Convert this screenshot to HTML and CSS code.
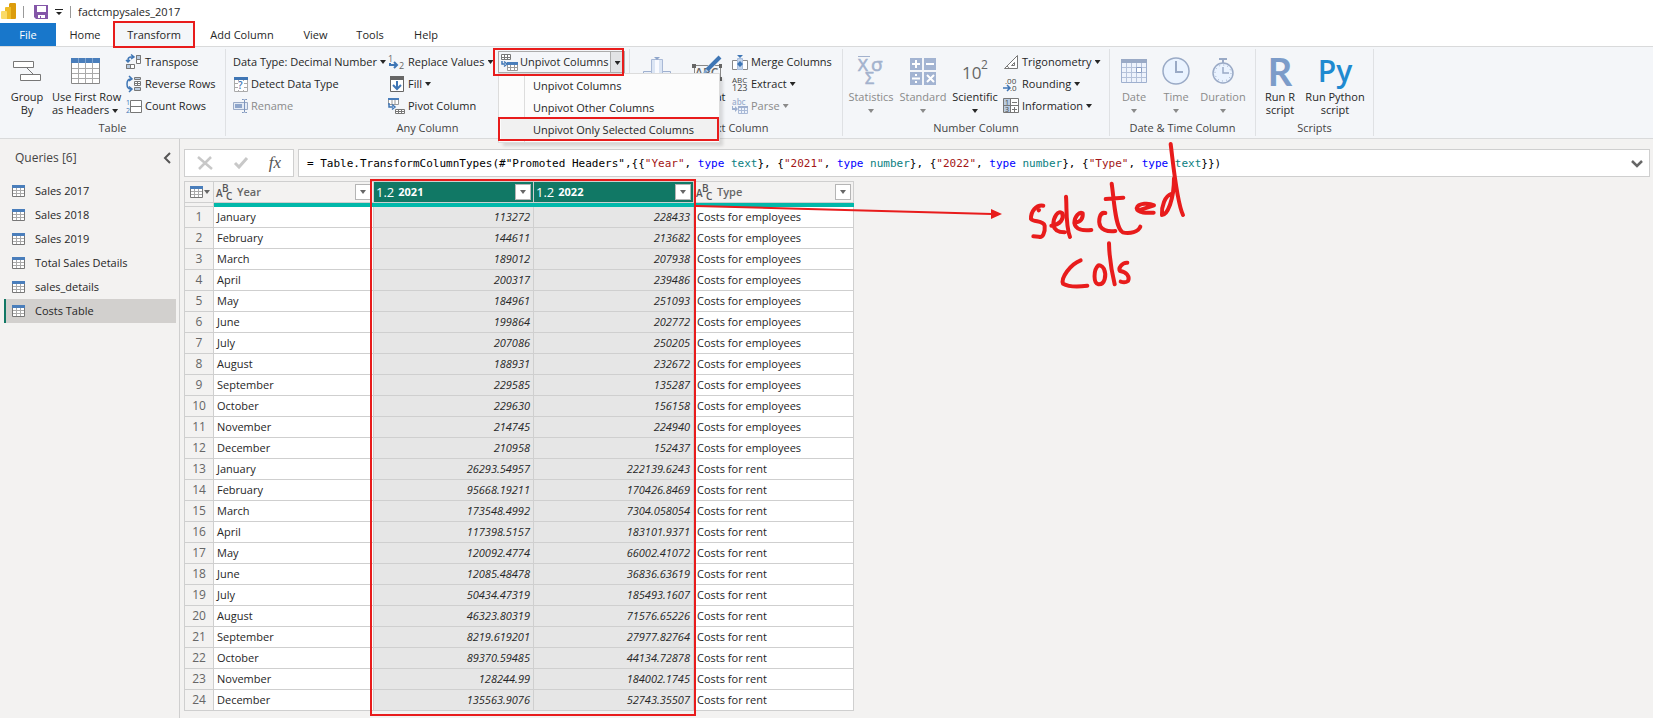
FILE: index.html
```html
<!DOCTYPE html>
<html lang="en">
<head>
<meta charset="utf-8">
<title>factcmpysales_2017</title>
<link rel="stylesheet" href="styles.css">
</head>
<body>
<svg class="defs" aria-hidden="true">
  <symbol id="table" viewBox="0 0 13 12"><path fill="#fff" stroke="#777" d="M.5.5h12v11H.5z"/><path stroke="#aaa" d="M1 5.500h11M1 8.500h11M4.500 3v8M8.500 3v8"/><path fill="#4a7ebb" d="M0 0h13v3H0z"/></symbol>
</svg>

<header class="titlebar">
  <svg width="15" height="17" viewBox="0 0 15 17"><path fill="#dc9c0c" d="M9 0h5q1 0 1 1v14q0 1-1 1H8V1z"/><path fill="#eebc28" d="M4 5q0-1 1-1h5v12H4z"/><path fill="#fadb68" d="M0 9q0-1 1-1h4q1 0 1 1v7H1q-1 0-1-1z"/></svg>
  <i class="rule"></i>
  <svg class="save" width="14" height="14" viewBox="0 0 14 14"><path fill="#8456a8" d="M0 0h14v14H2l-2-2z"/><path fill="#fff" d="M3 1h9v6H3zM4 10h7v3H7v-2H6v2H4z"/></svg>
  <svg width="8" height="8" viewBox="0 0 8 8"><path fill="#222" d="M0 1h8v1H0zM1 4h6L4 7z"/></svg>
  <i class="rule"></i>
  <span>factcmpysales_2017</span>
</header>

<nav class="tabs">
  <button class="file">File</button><button class="t-home">Home</button><button class="t-trans">Transform</button><button class="t-add">Add Column</button><button class="t-view">View</button><button class="t-tools">Tools</button><button class="t-help">Help</button>
</nav>

<section class="ribbon">
  <div class="group g-table">
    <div class="tools">
      <button class="big w50"><span class="ico"><svg width="30" height="22" viewBox="0 0 30 22"><path stroke="#777" d="M14 7l7 7"/><path fill="#fff" stroke="#777" d="M1.500 1.500h20v6h-20zM8.500 14.500h20v6h-20z"/></svg></span>Group<br>By</button>
      <button class="big w66"><span class="ico"><svg width="29" height="26" viewBox="0 0 29 26"><path fill="#fff" stroke="#888" d="M.5.5h28v25H.5z"/><path stroke="#aaa" d="M1 10.500h27M1 15.500h27M1 20.500h27M7.500 5v20M14.500 5v20M21.500 5v20"/><path fill="#4a7ebb" d="M0 0h29v5H0z"/><path stroke="#7fa5d2" d="M7.500 0v5M14.500 0v5M21.500 0v5"/></svg></span>Use First Row<br>as Headers <i class="dd"></i></button>
      <div class="stack">
        <button><svg width="16" height="16" viewBox="0 0 16 16"><path fill="#fff" stroke="#777" d="M10.500 1.500h4v8h-4zM.5 10.500h8v4h-8z"/><path fill="#b9cbe0" stroke="#777" d="M10.500 1.500h4v4h-4zM.5 10.500h4v4h-4z"/><path fill="none" stroke="#3f76b5" stroke-width="1.500" d="M2 8V6q0-3 3-3h2M0 6l2 2 2-2M5 .5L8 3 5 5"/></svg>Transpose</button>
        <button><svg width="16" height="16" viewBox="0 0 16 16"><path fill="#b9cbe0" stroke="#777" d="M8.500 1.500h6v2h-6zM8.500 11.500h6v3h-6z"/><path fill="#fff" stroke="#777" d="M8.500 5.500h6v4h-6zM8 7.500h7M11.500 5v5"/><path fill="none" stroke="#3f76b5" stroke-width="1.500" d="M5 3Q1 3 1 8t4 5M3 0l3 3-3 2M3 10.500L6 13l-3 3"/></svg>Reverse Rows</button>
        <button><svg width="16" height="16" viewBox="0 0 16 16"><path fill="#fff" stroke="#777" d="M4.500 2.500h11v12h-11zM4 8.500h12"/><g fill="#3f76b5" font-size="7"><text x="0" y="7">1</text><text x="0" y="15">2</text></g></svg>Count Rows</button>
      </div>
    </div>
    <div class="label">Table</div>
  </div>

  <div class="group g-any">
    <div class="tools">
      <div class="stack types">
        <button>Data Type: Decimal Number <i class="dd"></i></button>
        <button><svg width="15" height="15" viewBox="0 0 15 15"><path fill="#fff" stroke="#aaa" d="M1.500.500h13v14h-13zM2 6.500h12M2 10.500h12M5.500 3v11M10.500 3v11"/><path fill="#3f76b5" d="M1 0h14v3H1z"/><path fill="#fff" d="M5 4h6v9H5z"/><text x="5" y="12" fill="#3f76b5" font-size="10" font-weight="600">?</text></svg>Detect Data Type</button>
        <button class="off"><svg width="15" height="14" viewBox="0 0 15 14"><path fill="#e4ebf5" stroke="#9aaac6" d="M.5 3.500h14v7H.5z"/><path fill="#8fa6cb" d="M2 5h7v4H2z"/><path fill="none" stroke="#7d95bd" d="M9 .5h1.500q1 0 1 1v11q0 1-1 1H9M14 .5h-1.500q-1 0-1 1v11q0 1 1 1H14"/></svg>Rename</button>
      </div>
      <div class="stack values">
        <button><svg width="17" height="16" viewBox="0 0 17 16"><g fill="#666" font-size="9"><text x="0" y="8">1</text><text x="11" y="15">2</text></g><path fill="none" stroke="#3f76b5" stroke-width="2" d="M2 9v2h6M6 8l3 3-3 3"/></svg>Replace Values <i class="dd"></i></button>
        <button><svg width="17" height="16" viewBox="0 0 17 16"><path fill="#fff" stroke="#666" d="M2.500.5h13v15h-13z"/><path fill="#666" d="M2 0h14v4H2z"/><path fill="none" stroke="#3f76b5" stroke-width="2" d="M9 5v8M5 9l4 4 4-4"/></svg>Fill <i class="dd"></i></button>
        <button><svg width="17" height="16" viewBox="0 0 17 16"><path fill="#fff" stroke="#999" d="M.5 1.500h10v5H.5zM4 2v5M7 2v5"/><path fill="#4a7ebb" d="M0 0h11v2H0z"/><path fill="#fff" stroke="#777" d="M7.500 11.500h9v4h-9zM7 13.500h10M10.500 11v5M13.500 11v5"/><path fill="none" stroke="#3f76b5" stroke-width="1.500" d="M1 5v4h4M4 6.500L7 9l-3 2.500"/></svg>Pivot Column</button>
      </div>
      <div class="unpivot">
        <button class="split"><svg width="17" height="17" viewBox="0 0 17 17"><path fill="#fff" stroke="#777" d="M.5.5h9v5h-9zM0 3.500h10M3.500 0v6M6.500 0v6"/><path fill="#fff" stroke="#999" d="M6.500 10.500h10v6h-10zM7 13.500h9M9.500 11v5M13.500 11v5"/><path fill="#4a7ebb" d="M6 8h11v3H6z"/><path fill="none" stroke="#3f76b5" stroke-width="1.500" d="M1 7v3h3M3 7.500L6 10l-3 2.500"/></svg>Unpivot Columns</button><button class="more" aria-label="More"><i class="dd"></i></button>
        <div class="menu">
          <button>Unpivot Columns</button>
          <button>Unpivot Other Columns</button>
          <button class="hot">Unpivot Only Selected Columns</button>
        </div>
      </div>
    </div>
    <div class="label">Any Column</div>
  </div>

  <div class="group g-text">
    <div class="tools">
      <button class="big w50 off"><span class="ico"><svg width="28" height="28" viewBox="0 0 28 28"><path fill="#eaf0fa" stroke="#9fb0cf" d="M.5 26V14.500h9V26M18.500 26V14.500h9V26"/><path fill="#dbe5f4" stroke="#a9b9d6" d="M8.500 2.500h11V26h-11z"/><path fill="#f8faff" d="M12 3h4v23h-4z"/><path fill="#8fa6cb" d="M11 0h6l-3 3z"/></svg></span>Split<br>Column</button>
      <button class="big w50"><span class="ico"><svg width="30" height="32" viewBox="0 0 30 32"><path fill="none" stroke="#888" d="M2.500 10.500h26v14h-26z"/><path fill="#666" d="M0 9h4v4H0zM27 9h3v4h-3zM27 22h3v4h-3z"/><text x="3" y="22" font-size="12" font-weight="600" fill="#666">ABC</text><path stroke="#f4f6f9" stroke-width="5" d="M16 14L28 2"/><path stroke="#3f76b5" stroke-width="4" d="M15 15L28 2"/><path fill="#7fa5d2" d="M11 19l2-5 3 3z"/></svg></span>Format<br><i class="dd"></i></button>
      <div class="stack">
        <button><svg width="16" height="15" viewBox="0 0 16 15"><path fill="#fff" stroke="#888" d="M5 5.500H.5v9H5M11 5.500h4.500v9H11"/><path fill="#c3d4ea" stroke="#a8bddc" d="M5.500 3.500h5v11h-5z"/><path fill="#3f76b5" d="M5 0h6L8 3zM5 9l3-3 3 3-3 3z"/></svg>Merge Columns</button>
        <button><svg width="16" height="18" viewBox="0 0 16 18"><g fill="#444" font-size="8"><text x="0" y="8">ABC</text><text x="0" y="16" font-size="9">123</text></g></svg>Extract <i class="dd"></i></button>
        <button class="off"><svg width="16" height="16" viewBox="0 0 16 16"><text x="0" y="7" font-size="8" font-weight="600" fill="#9fb0cf">abc</text><path fill="#eef3fb" stroke="#a9b9d6" d="M6.500 9.500h9v6h-9zM6 12.500h10M9.500 9v7M12.500 9v7"/><path fill="#9fb0cf" d="M6 8h10v2H6zM0 8h1v2h2V8l3 3-3 3v-2H0z"/></svg>Parse <i class="dd"></i></button>
      </div>
    </div>
    <div class="label">Text Column</div>
  </div>

  <div class="group g-num">
    <div class="tools">
      <button class="big w50 off"><span class="ico"><svg width="28" height="30" viewBox="0 0 28 30"><g fill="#a3b2cd" stroke="#a3b2cd" stroke-width=".6"><text x="1" y="15" font-size="17">X</text><text x="14" y="15" font-size="19">σ</text><text x="8" y="28" font-size="16">Σ</text></g><path stroke="#a3b2cd" d="M1 .500h12"/></svg></span>Statistics<br><i class="dd"></i></button>
      <button class="big w54 off"><span class="ico"><svg width="26" height="27" viewBox="0 0 26 27"><path fill="#a3b4d2" d="M0 0h12v12H0zM14 0h12v12H14zM0 14h12v13H0zM14 14h12v13H14z"/><path stroke="#fff" stroke-width="2" d="M2 6h8M6 2v8M16 6h8M2 20.500h8M17 17l7 7M24 17l-7 7"/><path fill="#fff" d="M5 16h2v2H5zM5 23h2v2H5z"/></svg></span>Standard<br><i class="dd"></i></button>
      <button class="big w50"><span class="ico"><svg width="26" height="28" viewBox="0 0 26 28"><g fill="#666"><text x="0" y="22" font-size="17">10</text><text x="19" y="12" font-size="12">2</text></g></svg></span>Scientific<br><i class="dd"></i></button>
      <div class="stack trig">
        <button><svg width="16" height="16" viewBox="0 0 16 16"><path fill="#fff" stroke="#777" d="M1.500 14.500h13V1.500zM8.500 11.500h3v-3zM4 12q2 1 2 3"/></svg>Trigonometry <i class="dd"></i></button>
        <button><svg width="16" height="16" viewBox="0 0 16 16"><g fill="#444" font-size="8"><text x="2" y="8">.00</text><text x="7" y="15">.0</text></g><path fill="none" stroke="#3f76b5" stroke-width="1.500" d="M0 12h6M4 9l3 3-3 3"/></svg>Rounding <i class="dd"></i></button>
        <button><svg width="16" height="16" viewBox="0 0 16 16"><path fill="#fff" stroke="#777" d="M.5.5h15v14H.5z"/><path fill="#b9cbe0" d="M1 1h6v13H1z"/><path stroke="#777" d="M7.500 1v13M1 7.500h14M9 4.500h5M9 11.500h5M11.500 9v5"/><g fill="#444" font-size="7"><text x="2" y="7">1</text><text x="2" y="14">3</text></g></svg>Information <i class="dd"></i></button>
      </div>
    </div>
    <div class="label">Number Column</div>
  </div>

  <div class="group g-date">
    <div class="tools">
      <button class="big w44 off"><span class="ico"><svg width="26" height="24" viewBox="0 0 26 24"><path fill="#eef3fc" stroke="#9fb0cf" d="M.5.5h25v23H.5z"/><path fill="#9aaac6" d="M0 0h26v4H0z"/><path stroke="#b5c2da" d="M1 8.500h24M1 13.500h24M1 18.500h24M5.500 4v19M10.500 4v19M15.500 4v19M20.500 4v19"/><path fill="#fff" stroke="#8b9fc4" d="M15.500 8.500h5v5h-5z"/></svg></span>Date<br><i class="dd"></i></button>
      <button class="big w40 off"><span class="ico"><svg width="28" height="28" viewBox="0 0 28 28"><circle cx="14" cy="14" r="13" fill="#eaf3ff" stroke="#9aaac6" stroke-width="1.500"/><path fill="none" stroke="#9aaac6" stroke-width="2" d="M14 4v11h7"/></svg></span>Time<br><i class="dd"></i></button>
      <button class="big w54 off"><span class="ico"><svg width="22" height="26" viewBox="0 0 22 26"><path fill="#9aaac6" d="M7 0h8v2h-3v3h-2V2H7z"/><circle cx="11" cy="15" r="10" fill="#eaf3ff" stroke="#9aaac6" stroke-width="1.500"/><path fill="none" stroke="#9aaac6" stroke-width="1.500" d="M11 9v6h6"/><circle cx="11" cy="15" r="8" fill="none" stroke="#9aaac6" stroke-dasharray="1 3.190"/></svg></span>Duration<br><i class="dd"></i></button>
    </div>
    <div class="label">Date &amp; Time Column</div>
  </div>

  <div class="group g-script">
    <div class="tools">
      <button class="big w44"><span class="ico letter r">R</span>Run R<br>script</button>
      <button class="big w66"><span class="ico letter py">Py</span>Run Python<br>script</button>
    </div>
    <div class="label">Scripts</div>
  </div>
</section>

<main>
  <aside>
    <div class="head"><h2>Queries [6]</h2><button aria-label="Collapse"><svg width="8" height="12" viewBox="0 0 8 12"><path fill="none" stroke="#555" stroke-width="2" d="M7 1L2 6l5 5"/></svg></button></div>
    <ul>
      <li><button><svg><use href="#table"/></svg>Sales 2017</button></li>
      <li><button><svg><use href="#table"/></svg>Sales 2018</button></li>
      <li><button><svg><use href="#table"/></svg>Sales 2019</button></li>
      <li><button><svg><use href="#table"/></svg>Total Sales Details</button></li>
      <li><button><svg><use href="#table"/></svg>sales_details</button></li>
      <li><button class="sel"><svg><use href="#table"/></svg>Costs Table</button></li>
    </ul>
  </aside>
  <section class="work">
    <div class="formula">
      <div class="acts">
        <button aria-label="Cancel"><svg width="16" height="14" viewBox="0 0 16 14"><path fill="none" stroke="#c8c8c8" stroke-width="2.500" d="M1 1l14 12M14 1L2 13"/></svg></button>
        <button aria-label="Apply"><svg width="14" height="12" viewBox="0 0 14 12"><path fill="none" stroke="#c8c8c8" stroke-width="3" d="M1 6l4 4 8-9"/></svg></button>
        <button class="fx">fx</button>
      </div>
      <div class="code"><code>= Table.TransformColumnTypes(#"Promoted Headers",{{<s>"Year"</s>, <b>type</b> <u>text</u>}, {<s>"2021"</s>, <b>type</b> <u>number</u>}, {<s>"2022"</s>, <b>type</b> <u>number</u>}, {<s>"Type"</s>, <b>type</b> <u>text</u>}})</code><button aria-label="Expand"><svg width="12" height="8" viewBox="0 0 12 8"><path fill="none" stroke="#666" stroke-width="2.500" d="M1 1l5 5 5-5"/></svg></button></div>
    </div>
    <table>
      <colgroup><col class="c-num"><col class="c-data"><col class="c-data"><col class="c-data"><col class="c-data"></colgroup>
      <thead>
        <tr>
          <th><div class="hd corner"><svg width="13" height="12"><use href="#table"/></svg><i class="dd"></i></div></th>
          <th><div class="hd"><svg class="abc" width="17" height="18" viewBox="0 0 17 18"><text x="0" y="14">A</text><text x="6" y="9">B</text><text x="10" y="17">C</text></svg><span class="name">Year</span><button aria-label="Filter Year"><i class="dd"></i></button></div></th>
          <th class="on"><div class="hd"><em>1.2</em><span class="name">2021</span><button aria-label="Filter 2021"><i class="dd"></i></button></div></th>
          <th class="on"><div class="hd"><em>1.2</em><span class="name">2022</span><button aria-label="Filter 2022"><i class="dd"></i></button></div></th>
          <th><div class="hd"><svg class="abc" width="17" height="18" viewBox="0 0 17 18"><text x="0" y="14">A</text><text x="6" y="9">B</text><text x="10" y="17">C</text></svg><span class="name">Type</span><button aria-label="Filter Type"><i class="dd"></i></button></div></th>
        </tr>
        <tr class="bar"><td></td><td></td><td></td><td></td><td></td></tr>
      </thead>
      <tbody>
        <tr><th>1</th><td>January</td><td>113272</td><td>228433</td><td>Costs for employees</td></tr>
        <tr><th>2</th><td>February</td><td>144611</td><td>213682</td><td>Costs for employees</td></tr>
        <tr><th>3</th><td>March</td><td>189012</td><td>207938</td><td>Costs for employees</td></tr>
        <tr><th>4</th><td>April</td><td>200317</td><td>239486</td><td>Costs for employees</td></tr>
        <tr><th>5</th><td>May</td><td>184961</td><td>251093</td><td>Costs for employees</td></tr>
        <tr><th>6</th><td>June</td><td>199864</td><td>202772</td><td>Costs for employees</td></tr>
        <tr><th>7</th><td>July</td><td>207086</td><td>250205</td><td>Costs for employees</td></tr>
        <tr><th>8</th><td>August</td><td>188931</td><td>232672</td><td>Costs for employees</td></tr>
        <tr><th>9</th><td>September</td><td>229585</td><td>135287</td><td>Costs for employees</td></tr>
        <tr><th>10</th><td>October</td><td>229630</td><td>156158</td><td>Costs for employees</td></tr>
        <tr><th>11</th><td>November</td><td>214745</td><td>224940</td><td>Costs for employees</td></tr>
        <tr><th>12</th><td>December</td><td>210958</td><td>152437</td><td>Costs for employees</td></tr>
        <tr><th>13</th><td>January</td><td>26293.54957</td><td>222139.6243</td><td>Costs for rent</td></tr>
        <tr><th>14</th><td>February</td><td>95668.19211</td><td>170426.8469</td><td>Costs for rent</td></tr>
        <tr><th>15</th><td>March</td><td>173548.4992</td><td>7304.058054</td><td>Costs for rent</td></tr>
        <tr><th>16</th><td>April</td><td>117398.5157</td><td>183101.9371</td><td>Costs for rent</td></tr>
        <tr><th>17</th><td>May</td><td>120092.4774</td><td>66002.41072</td><td>Costs for rent</td></tr>
        <tr><th>18</th><td>June</td><td>12085.48478</td><td>36836.63619</td><td>Costs for rent</td></tr>
        <tr><th>19</th><td>July</td><td>50434.47319</td><td>185493.1607</td><td>Costs for rent</td></tr>
        <tr><th>20</th><td>August</td><td>46323.80319</td><td>71576.65226</td><td>Costs for rent</td></tr>
        <tr><th>21</th><td>September</td><td>8219.619201</td><td>27977.82764</td><td>Costs for rent</td></tr>
        <tr><th>22</th><td>October</td><td>89370.59485</td><td>44134.72878</td><td>Costs for rent</td></tr>
        <tr><th>23</th><td>November</td><td>128244.99</td><td>184002.1745</td><td>Costs for rent</td></tr>
        <tr><th>24</th><td>December</td><td>135563.9076</td><td>52743.35507</td><td>Costs for rent</td></tr>
      </tbody>
    </table>
  </section>
</main>

<svg class="ink" width="1240" height="718" viewBox="0 0 1240 718" role="img" aria-label="selected cols">
  <g fill="none" stroke="#e81c1c" stroke-width="2">
    <path d="M114 22h80v25h-80zM494 49h129v26H494zM499 118h219v22H499zM371 180h324v535H371z"/>
    <path d="M696 206l296 8"/>
  </g>
  <path fill="#e81c1c" d="M991 209l11 5-11 5z"/>
  <svg x="990" y="135" width="240" height="160" viewBox="0 0 720 480">
    <g fill="none" stroke="#e81c1c" stroke-width="12" stroke-linecap="round" stroke-linejoin="round">
      <path d="M146 226l1-1M160 212C138 208 122 230 123 252C132 262 160 256 164 272C166 292 158 310 146 305L130 304"/>
      <path d="M184 272C212 268 222 252 217 235C205 224 190 245 190 270C193 288 208 292 224 292M228 185C231 220 226 270 240 306"/>
      <path d="M254 262C272 262 280 250 278 235C268 230 254 242 253 264C256 284 280 288 304 285"/>
      <path d="M346 234C328 230 324 258 331 274C340 288 358 290 376 288"/>
      <path d="M365 146C372 190 375 280 398 292C420 298 446 290 451 275M347 192L400 188"/>
      <path d="M446 226L492 211C478 204 445 203 440 220C442 235 472 234 491 233"/>
      <path d="M546 176C524 182 514 215 516 240C532 240 552 195 552 130M542 27C550 90 560 200 579 240"/>
      <path d="M272 376C240 388 212 430 219 446C240 458 270 455 292 452"/>
      <path d="M324 392C310 405 310 445 325 448C345 450 350 420 342 402C336 390 326 390 324 392"/>
      <path d="M357 325C358 370 365 410 374 448"/>
      <path d="M412 383C396 382 384 400 390 408C410 410 420 425 414 438C406 444 398 442 392 440"/>
    </g>
  </svg>
</svg>
</body>
</html>
```
FILE: styles.css
```css
* { box-sizing: border-box; }
body {
  margin: 0;
  min-height: 100vh;
  display: flex;
  flex-direction: column;
  position: relative;
  background: #f3f2f1;
  color: #262626;
  font: 11px/14px "Open Sans", "Noto Sans", sans-serif;
}
button {
  margin: 0;
  padding: 0;
  border: 0;
  background: none;
  color: inherit;
  font: inherit;
  white-space: nowrap;
}
svg { flex: none; display: block; overflow: visible; }
.defs { position: absolute; width: 0; height: 0; }
.dd {
  display: inline-block;
  flex: none;
  width: 6px;
  height: 4px;
  background: currentColor;
  clip-path: polygon(0 0, 100% 0, 50% 100%);
  vertical-align: middle;
}

/* title bar and tabs */
.titlebar {
  height: 23px;
  padding: 0 1px;
  display: flex;
  align-items: center;
  gap: 7px;
  background: #fff;
}
.rule { width: 1px; height: 12px; background: #999; }
.save { margin-left: 3px; }
.tabs {
  height: 23px;
  display: flex;
  background: #fff;
}
.tabs button { line-height: 24px; }
.tabs .file { width: 56px; background: #1877cb; color: #fff; }
.t-home { width: 58px; }
.tabs .t-trans { width: 80px; background: #f4f6f9; }
.t-add { width: 96px; }
.t-view { width: 51px; }
.t-tools { width: 58px; }
.t-help { width: 54px; }

/* ribbon */
.ribbon {
  height: 93px;
  display: flex;
  padding: 2px 0;
  background: #f4f6f9;
  border-top: 1px solid #d9dadb;
  border-bottom: 1px solid #d9dadb;
}
.group {
  display: flex;
  flex-direction: column;
  border-right: 1px solid #dfe1e4;
  padding-top: 2px;
}
.tools { display: flex; height: 66px; padding-left: 2px; }
.label { text-align: center; line-height: 22px; height: 18px; color: #444; }
.g-table { width: 226px; }
.g-table .stack { margin-left: 8px; }
.g-any { width: 404px; }
.g-any .tools { padding-left: 7px; }
.g-text { width: 213px; }
.g-num { width: 267px; }
.g-num .tools { padding-left: 3px; }
.g-date { width: 146px; }
.g-script { width: 118px; }
.big {
  display: block;
  line-height: 13px;
  text-align: center;
}
.ico {
  height: 38px;
  display: flex;
  align-items: center;
  justify-content: center;
}
.w40 { width: 40px; }
.w44 { width: 44px; }
.w50 { width: 50px; }
.w54 { width: 54px; }
.w66 { width: 66px; }
.off { color: #8a8a8a; }
.stack button {
  height: 22px;
  display: flex;
  align-items: center;
  gap: 3px;
}
.types { width: 155px; }
.values { width: 110px; }
.trig { margin-left: 3px; }
.letter { font-size: 36px; line-height: 38px; }
.r { color: #7c9cc9; font-family: Lato, sans-serif; font-size: 38px; font-weight: 700; }
.py { color: #1f8ad0; font-size: 30px; font-weight: 600; line-height: 34px; }

.unpivot {
  position: relative;
  display: flex;
  height: 22px;
}
.split {
  width: 113px;
  display: flex;
  align-items: center;
  gap: 2px;
  padding-left: 2px;
  border: 1px solid #acacac;
  background: #f4f6f9;
}
.more {
  width: 14px;
  border: 1px solid #acacac;
  border-left: 0;
  background: #e2e3e5;
  line-height: 10px;
}
.menu {
  position: absolute;
  left: 0;
  top: 22px;
  width: 222px;
  padding: 1px 2px;
  background: linear-gradient(90deg, #fcfcfc 25px, #ddd 25px, #ddd 26px, #fcfcfc 26px);
  border: 1px solid #dcdcdc;
  box-shadow: 4px 4px 3px -1px rgba(0, 0, 0, .12);
  z-index: 2;
}
.menu button {
  display: block;
  width: 100%;
  height: 22px;
  padding-left: 32px;
  text-align: left;
}
.menu .hot { background: #f1f1f1; }

/* queries pane */
main { flex: 1; display: flex; }
aside {
  width: 180px;
  padding: 0 3px 0 4px;
  border-right: 1px solid #cfcfcf;
}
.head {
  height: 40px;
  padding: 0 5px 3px 11px;
  display: flex;
  align-items: center;
  justify-content: space-between;
}
h2 { margin: 0; font-size: 12px; font-weight: 400; color: #444; }
ul { margin: 0; padding: 0; list-style: none; }
aside li button {
  width: 100%;
  height: 24px;
  display: flex;
  align-items: center;
  gap: 10px;
  padding: 0 0 0 6px;
  border-left: 2px solid transparent;
}
aside li svg { width: 13px; height: 12px; }
aside .sel { background: #d2d0ce; border-color: #117865; }

/* formula bar */
.work { flex: 1; padding: 10px 3px 6px 4px; }
.formula { display: flex; gap: 4px; margin-bottom: 4px; }
.acts {
  width: 110px;
  height: 28px;
  display: flex;
  align-items: center;
  justify-content: space-between;
  padding: 0 12px;
  background: #fff;
  border: 1px solid #cfcfcf;
}
.fx { font: italic 17px/20px "Liberation Serif", serif; color: #555; }
.code {
  flex: 1;
  display: flex;
  align-items: center;
  justify-content: space-between;
  padding: 1px 6px 0 8px;
  background: #fff;
  border: 1px solid #cfcfcf;
}
code { font: 11px/14px "DejaVu Sans Mono", monospace; color: #000; white-space: pre; }
code s { color: #a31515; text-decoration: none; }
code b { color: #00f; font-weight: 400; }
code u { color: #098080; text-decoration: none; }

/* data grid */
table {
  table-layout: fixed;
  width: 670px;
  border-spacing: 0;
  border: solid #cfcfcf;
  border-width: 1px 0 0 1px;
}
.c-num { width: 29px; }
.c-data { width: 160px; }
th, td {
  height: 21px;
  padding: 0 3px;
  border: solid #cfcfcf;
  border-width: 0 1px 1px 0;
  line-height: 20px;
  white-space: nowrap;
}
thead th { padding: 0; }
tbody th { padding: 0; font-weight: 400; font-size: 12px; color: #666; }
tbody td { background: #fff; }
tbody td:nth-child(3), tbody td:nth-child(4) {
  background: #e6e6e6;
  text-align: right;
  font-style: italic;
}
.bar td { height: 4px; padding: 0; border-bottom: 0; border-color: #01b8aa; background: #01b8aa; line-height: 0; }
.bar td:first-child { background: #f3f2f1; border-color: #cfcfcf; border-bottom: 1px solid #cfcfcf; }
.hd {
  height: 20px;
  display: flex;
  align-items: center;
  gap: 4px;
  padding: 0 2px;
  color: #666;
  font-weight: 600;
}
.name { flex: 1; text-align: left; }
.hd em { font-style: normal; font-weight: 400; font-size: 13px; }
.corner { gap: 1px; padding: 0 0 0 5px; }
.abc { fill: #555; font-size: 10px; }
.on .hd { background: #117865; color: #fff; font-weight: 700; }
.hd button {
  display: flex;
  align-items: center;
  justify-content: center;
  width: 16px;
  height: 16px;
  background: #fff;
  border: 1px solid #b5b5b5;
  color: #666;
}

/* hand-drawn notes lie over the whole window */
.ink { position: absolute; left: 0; top: 0; z-index: 5; pointer-events: none; }
```
